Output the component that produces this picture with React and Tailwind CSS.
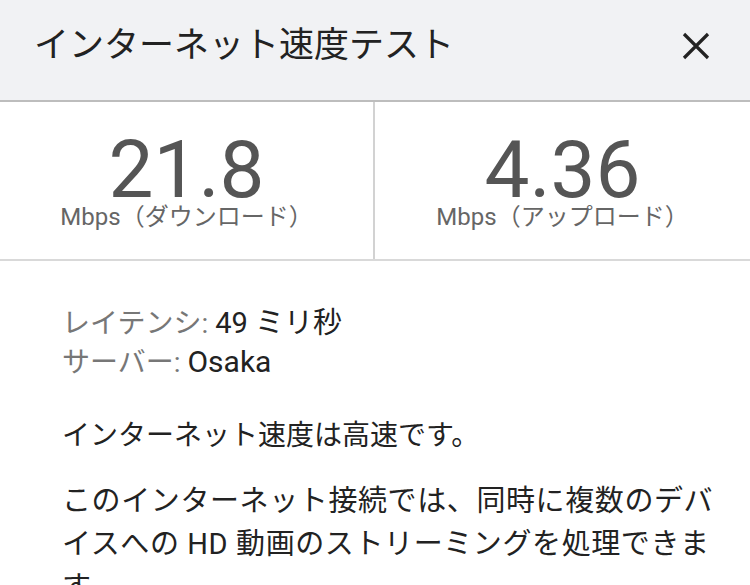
export default function App() {
  const ff = { fontFamily: 'Roboto, "Noto Sans CJK JP", sans-serif' };
  return (
    <div className="w-[750px] bg-white" style={ff}>
      <header className="h-[102px] bg-[#f1f2f4] border-b-2 border-[#bdbdbd] flex items-start justify-between pl-[34px] pr-[38px] pt-[26px]">
        <h1 className="text-[35px] leading-[40px] font-normal text-[#222]">インターネット速度テスト</h1>
        <button className="mt-[4px] w-[32px] h-[32px] flex items-center justify-center" aria-label="閉じる">
          <svg width="30" height="30" viewBox="0 0 30 30">
            <path d="M3 3 L27 27 M27 3 L3 27" stroke="#222" strokeWidth="3.2" strokeLinecap="butt" />
          </svg>
        </button>
      </header>

      <section className="grid grid-cols-2 border-b-2 border-[#d9d9d9]">
        <div className="flex flex-col items-center pt-[32px] pb-[31px] border-r-2 border-[#d2d2d2]">
          <div className="text-[80px] leading-[72px] text-[#555] font-normal">21.8</div>
          <div className="text-[24px] leading-[22px] text-[#666]">Mbps（ダウンロード）</div>
        </div>
        <div className="flex flex-col items-center pt-[32px] pb-[31px]">
          <div className="text-[80px] leading-[72px] text-[#555] font-normal">4.36</div>
          <div className="text-[24px] leading-[22px] text-[#666]">Mbps（アップロード）</div>
        </div>
      </section>

      <main className="pl-[62px] pr-[28px] pt-[43px]">
        <div className="text-[28px] leading-[38px]">
          <p>
            <span className="text-[#777]">レイテンシ: </span>
            <span className="text-[#222] text-[29px]">49 ミリ秒</span>
          </p>
          <p>
            <span className="text-[#777]">サーバー: </span>
            <span className="text-[#222] text-[30px]">Osaka</span>
          </p>
        </div>
        <p className="mt-[32px] text-[28px] leading-[43px] text-[#222]">インターネット速度は高速です。</p>
        <p className="mt-[23px] text-[29px] leading-[43px] tracking-[0.6px] text-[#222]">
          このインターネット接続では、同時に複数のデバイスへの HD 動画のストリーミングを処理できます。
        </p>
      </main>
    </div>
  );
}
